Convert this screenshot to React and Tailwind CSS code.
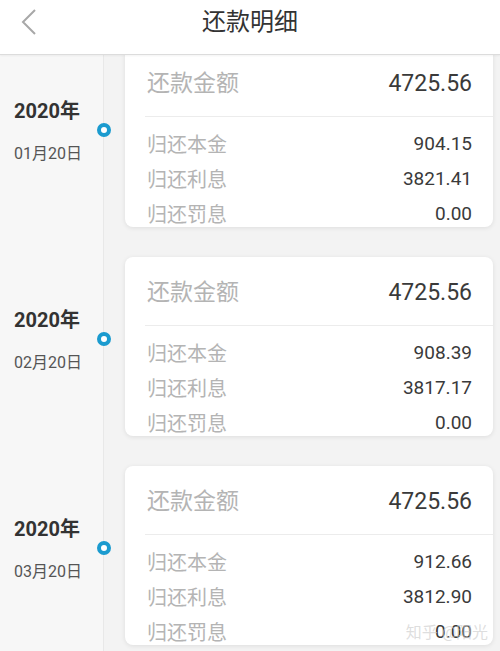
const records = [
  { month: '01', principal: '904.15', interest: '3821.41' },
  { month: '02', principal: '908.39', interest: '3817.17' },
  { month: '03', principal: '912.66', interest: '3812.90' },
];

function Row({ label, value }) {
  return (
    <div className="flex h-[35px] items-center justify-between">
      <span className="text-[20px] text-[#b4b4b4]">{label}</span>
      <span className="text-[19px] text-[#3a3a3a]">{value}</span>
    </div>
  );
}

function Item({ r }) {
  return (
    <div className="flex h-[209px] shrink-0">
      <div className="relative w-[104px] border-r border-[#e8e8e8] bg-[#f7f7f7] pl-[14px] pt-[49px]">
        <div className="text-[20px] font-bold leading-[28px] text-[#333]">2020年</div>
        <div className="mt-[17px] text-[16px] leading-[24px] text-[#555]">{r.month}月20日</div>
        <div className="absolute right-[-8px] top-[75px] h-[14px] w-[14px] rounded-full border-[4px] border-[#1b9bcf] bg-white" />
      </div>
      <div className="ml-[21px] h-[179px] w-[368px] overflow-hidden rounded-[8px] bg-white shadow-[0_1px_5px_rgba(0,0,0,0.09)]">
        <div className="flex h-[68px] items-center justify-between pl-[22px] pr-[21px] pt-[5px]">
          <span className="text-[23px] text-[#b4b4b4]">还款金额</span>
          <span className="text-[23px] text-[#3a3a3a]">4725.56</span>
        </div>
        <div className="ml-[20px] border-t border-[#ececec]" />
        <div className="pl-[22px] pr-[21px] pt-[10px]">
          <Row label="归还本金" value={r.principal} />
          <Row label="归还利息" value={r.interest} />
          <Row label="归还罚息" value="0.00" />
        </div>
      </div>
    </div>
  );
}

export default function App() {
  return (
    <div
      className="relative flex h-[651px] w-[500px] flex-col overflow-hidden bg-[#f3f3f3]"
      style={{ fontFamily: "Roboto, 'Noto Sans CJK SC', sans-serif" }}
    >
      {/* Header */}
      <div className="relative z-10 flex h-[55px] shrink-0 justify-center border-b border-[#dcdcdc] bg-white pt-[5px] shadow-[0_1px_2px_rgba(0,0,0,0.05)]">
        <svg className="absolute left-[18px] top-[8px]" width="22" height="28" viewBox="0 0 22 28">
          <polyline points="17,2 5,14 17,26" fill="none" stroke="#a8a8a8" strokeWidth="2" />
        </svg>
        <span className="text-[24px] leading-[34px] text-[#333]">还款明细</span>
      </div>

      {/* Timeline list */}
      <div className="flex-1 overflow-hidden">
        <div className="mt-[-7px] flex flex-col">
          {records.map((r) => (
            <Item key={r.month} r={r} />
          ))}
        </div>
      </div>

      {/* watermark sits over the last value, as in the screenshot */}
      <div className="pointer-events-none absolute bottom-[6px] right-[12px] text-[16px] text-[#d0d0d0]/70">知乎 @阳光</div>
    </div>
  );
}
